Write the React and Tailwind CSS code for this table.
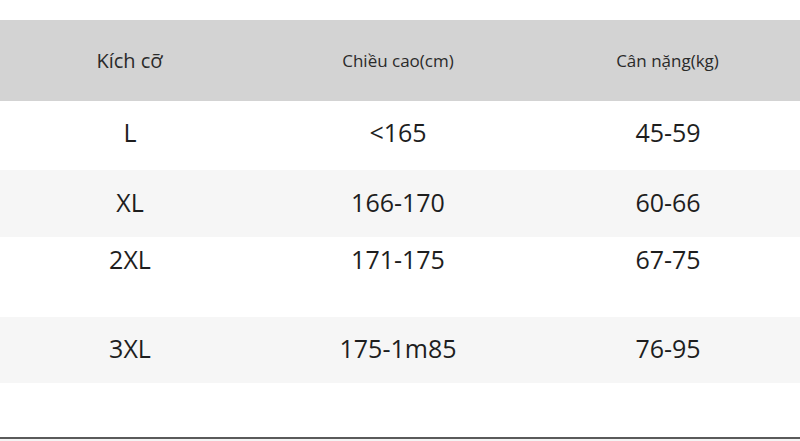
const rows = [
  { size: "L", height: "<165", weight: "45-59", band: "h-[69px] bg-white", inner: "h-[63px]" },
  { size: "XL", height: "166-170", weight: "60-66", band: "h-[67px] bg-[#f6f6f6]", inner: "h-[65px]" },
  { size: "2XL", height: "171-175", weight: "67-75", band: "h-[80px] bg-white", inner: "h-[46px]" },
  { size: "3XL", height: "175-1m85", weight: "76-95", band: "h-[66px] bg-[#f6f6f6]", inner: "h-[64px]" },
];

const App = () => {
  return (
    <div
      className="w-[800px] h-[441px] bg-white flex flex-col overflow-hidden"
      style={{ fontFamily: '"Open Sans", "Noto Sans", sans-serif' }}
    >
      <div className="h-[20px] shrink-0" />

      {/* header band */}
      <div className="h-[81px] shrink-0 bg-[#d3d3d3] grid grid-cols-[260px_276px_264px] items-center font-medium text-[#2a2a2a]">
        <div className="text-center text-[20px] pr-[1px]">Kích cỡ</div>
        <div className="text-center text-[17px]">Chiều cao(cm)</div>
        <div className="text-center text-[17px] pr-[1px]">Cân nặng(kg)</div>
      </div>

      {rows.map((r) => (
        <div key={r.size} className={`shrink-0 ${r.band}`}>
          <div
            className={`grid grid-cols-[260px_276px_264px] items-center text-[25px] font-medium text-[#1e1e1e] ${r.inner}`}
          >
            <div className="text-center">{r.size}</div>
            <div className="text-center">{r.height}</div>
            <div className="text-center">{r.weight}</div>
          </div>
        </div>
      ))}

      <div className="flex-1" />
      <div className="h-[2px] shrink-0 bg-[#5a5a5a]" />
      <div className="h-[2px] shrink-0 bg-[#f4f4f4]" />
    </div>
  );
};

export default App;
